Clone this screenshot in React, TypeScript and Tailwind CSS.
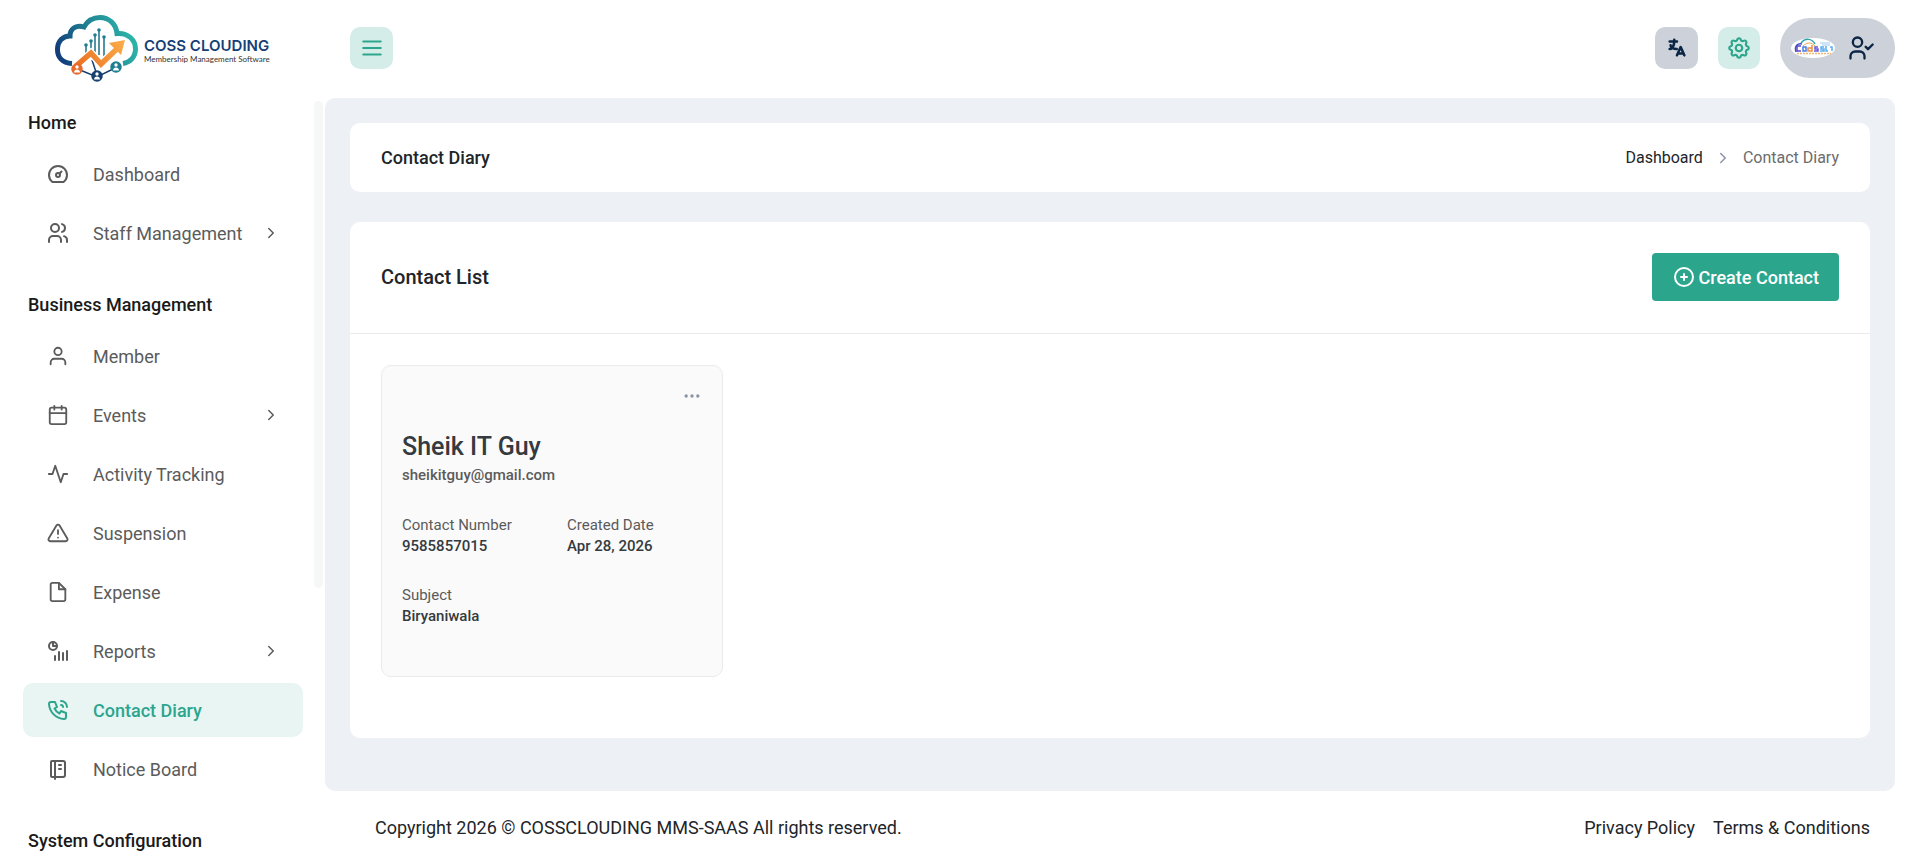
import clsx from 'clsx'
import type { IconType } from 'react-icons'
import { FiActivity, FiAlertTriangle, FiCalendar, FiFile, FiUser } from 'react-icons/fi'
import {
  TbChartInfographic,
  TbChevronRight,
  TbCirclePlus,
  TbDashboard,
  TbDots,
  TbMenu2,
  TbNotebook,
  TbPhoneCall,
  TbSettings,
  TbUsers,
} from 'react-icons/tb'

type NavItem = { label: string; icon: IconType; iconSize?: number; expandable?: boolean; active?: boolean }

const NAV: { title: string; items: NavItem[] }[] = [
  {
    title: 'Home',
    items: [
      { label: 'Dashboard', icon: TbDashboard },
      { label: 'Staff Management', icon: TbUsers, expandable: true },
    ],
  },
  {
    title: 'Business Management',
    items: [
      { label: 'Member', icon: FiUser, iconSize: 22 },
      { label: 'Events', icon: FiCalendar, iconSize: 22, expandable: true },
      { label: 'Activity Tracking', icon: FiActivity, iconSize: 22 },
      { label: 'Suspension', icon: FiAlertTriangle, iconSize: 22 },
      { label: 'Expense', icon: FiFile, iconSize: 22 },
      { label: 'Reports', icon: TbChartInfographic, expandable: true },
      { label: 'Contact Diary', icon: TbPhoneCall, active: true },
      { label: 'Notice Board', icon: TbNotebook },
    ],
  },
  { title: 'System Configuration', items: [] },
]

const contact = {
  name: 'Sheik IT Guy',
  email: 'sheikitguy@gmail.com',
  fields: [
    { label: 'Contact Number', value: '9585857015' },
    { label: 'Created Date', value: 'Apr 28, 2026' },
    { label: 'Subject', value: 'Biryaniwala' },
  ],
}

// cloud with the rising arrow and the three linked members
function CloudMark() {
  return (
    <svg width="84" height="68" viewBox="0 0 84 68" fill="none" className="shrink-0">
      <defs>
        <linearGradient id="cloud" x1="0" y1="50" x2="84" y2="15" gradientUnits="userSpaceOnUse">
          <stop offset="0.1" stopColor="#123f7c" />
          <stop offset="0.5" stopColor="#1f7f92" />
          <stop offset="0.9" stopColor="#2bb3a8" />
        </linearGradient>
        <linearGradient id="arrow" x1="20" y1="55" x2="72" y2="25" gradientUnits="userSpaceOnUse">
          <stop stopColor="#ea6a1f" />
          <stop offset="1" stopColor="#fbb04c" />
        </linearGradient>
      </defs>
      <path
        d="M18 48.500C8 48 3.500 42 3.500 34.500C3.500 26 9 21 16 21C16 13 23 9.500 30 12C34 5 40 2.500 46 2.500C55 2.500 62 9 63 18.500C74 17.500 81.500 25 81.500 34C81.500 42 76 47.500 69 48.500"
        stroke="url(#cloud)"
        strokeWidth="5"
      />
      <g stroke="#1d6f88" strokeWidth="1.500">
        <path d="M32 31v10M37 26v14M41 21v16M45 16v24M50 23v18" />
        <path d="M26 55l17 7l18-9M38 45l4 12" stroke="#17406f" />
      </g>
      <g fill="#1d7f90">
        <circle cx="32" cy="30" r="1.800" />
        <circle cx="37" cy="26" r="1.800" />
        <circle cx="41" cy="20" r="1.800" />
        <circle cx="45" cy="15" r="1.800" />
        <circle cx="50" cy="22" r="1.800" />
      </g>
      <path d="M22 51L37 38L47 49L66 31" stroke="#fff" strokeWidth="8" />
      <path d="M22 51L37 38L47 49L66 31" stroke="url(#arrow)" strokeWidth="5.500" />
      <path d="M71 25L55 28L67 40Z" fill="url(#arrow)" />
      {[
        { x: 23, y: 54, color: '#e8692a' },
        { x: 43, y: 61, color: '#17406f' },
        { x: 62, y: 52, color: '#1d7f90' },
      ].map((m) => (
        <g key={m.x}>
          <circle cx={m.x} cy={m.y} r="5" fill={m.color} stroke={m.color} strokeWidth="1.500" />
          <circle cx={m.x} cy={m.y - 2} r="1.700" fill="#fff" />
          <path d={`M${m.x - 3} ${m.y + 3.5}c0-4 6-4 6 0z`} fill="#fff" />
        </g>
      ))}
    </svg>
  )
}

function Avatar() {
  return (
    <svg width="44" height="20" viewBox="0 0 44 20" fill="none" aria-hidden="true" className="shrink-0">
      <ellipse cx="22" cy="10" rx="22" ry="10" fill="#fff" />
      <path d="M5 14c-2-6 2-9 6-8" stroke="#3f4fc4" strokeWidth="1.500" />
      <path d="M10 5c4-5 11-5 14 1" stroke="#2aa6a6" strokeWidth="1.500" />
      <path d="M12 8c4-4 9-4 12 0" stroke="#f0a24a" />
      <path d="M29 5h10M31 7h8" stroke="#9cc9f0" />
      <g strokeWidth="1.500">
        <path d="M10 8H6v5h4" stroke="#5a48c8" />
        <path d="M12 9h3v4h-3z" stroke="#4a7de0" />
        <path d="M21 7v6h-4v-3h4" stroke="#ee8f3a" />
        <path d="M27 9h-3v2h3v2h-4" stroke="#6a55d6" />
        <path d="M33 9h-3v2h3v2h-4M35 8v5h2M39 9h2v4" stroke="#58aef0" />
      </g>
      <path d="M6 15.500h34" stroke="#f4b472" strokeWidth="1.500" strokeDasharray="2 1" />
    </svg>
  )
}

function LanguageIcon() {
  return (
    <svg width="22" height="22" viewBox="0 0 24 24" fill="none" stroke="currentColor" strokeWidth="2.800" strokeLinecap="round" strokeLinejoin="round">
      <path d="M4 5h8M9 3v2c0 4.418-2.239 8-5 8M5 9c0 2.144 2.952 3.908 6.700 4M12 20l4-9l4 9M19.100 18h-6.200" />
    </svg>
  )
}

function UserCheckIcon() {
  return (
    <svg width="28" height="28" viewBox="0 0 24 24" fill="none" stroke="currentColor" strokeWidth="2" strokeLinecap="round" strokeLinejoin="round">
      <circle cx="9" cy="7" r="4" />
      <path d="M3 21v-2a4 4 0 0 1 4-4h4a4 4 0 0 1 4 4v2M16 11l2 2l4-4" />
    </svg>
  )
}

function Sidebar() {
  return (
    <aside className="flex h-screen w-[325px] shrink-0 flex-col overflow-hidden">
      <a href="#" className="flex h-[98px] shrink-0 items-center gap-1.5 pl-[54px]">
        <CloudMark />
        <span className="flex flex-col pt-1">
          <span className="font-[Inter,sans-serif] text-[15px] leading-4 font-semibold whitespace-nowrap text-[#173f77]">
            COSS CLOUDING
          </span>
          <span className="font-[Lato,sans-serif] text-[8px] leading-[10px] whitespace-nowrap text-[#333]">
            Membership Management Software
          </span>
        </span>
      </a>

      <div className="flex min-h-0 grow pr-0.5">
        <nav className="min-w-0 grow overflow-hidden pt-[13px] pr-[11px] pl-[23px]">
          {NAV.map((group) => (
            <section key={group.title} className="mb-[33px]">
              <h2 className="mb-3 pl-[5px] text-[18px] leading-6 font-medium text-[#1a1a1a]">{group.title}</h2>
              <ul className="flex flex-col gap-[5px]">
                {group.items.map(({ label, icon: Icon, iconSize = 24, expandable, active }) => (
                  <li key={label}>
                    <a
                      href="#"
                      className={clsx(
                        'flex h-[54px] items-center rounded-[10px] px-[23px] text-[18px]',
                        active ? 'bg-[#e9f5f3] font-medium text-[#2ca58d]' : 'text-[#5b5b5b]',
                      )}
                    >
                      <span className="mr-[23px] flex size-6 shrink-0 items-center justify-center">
                        <Icon size={iconSize} />
                      </span>
                      <span className="grow">{label}</span>
                      {expandable && <TbChevronRight size={18} />}
                    </a>
                  </li>
                ))}
              </ul>
            </section>
          ))}
        </nav>
        <div className="mt-[3px] h-[487px] w-[9px] shrink-0 rounded-full bg-[#f5f8f7]" />
      </div>
    </aside>
  )
}

function Header() {
  return (
    <header className="flex h-[98px] items-center justify-between pb-0.5 pl-[25px]">
      <button aria-label="Toggle menu" className="flex h-[42px] w-[43px] items-center justify-center rounded-[10px] bg-[#d5ede8] text-[#2ca58d]">
        <TbMenu2 size={26} />
      </button>
      <div className="flex items-center gap-5">
        <button aria-label="Language" className="flex h-[42px] w-[43px] items-center justify-center rounded-[10px] bg-[#cdd2da] text-[#0b2545]">
          <LanguageIcon />
        </button>
        <button aria-label="Settings" className="flex size-[42px] items-center justify-center rounded-[10px] bg-[#d5ede8] text-[#2ca58d]">
          <TbSettings size={26} />
        </button>
        <button aria-label="Account" className="flex h-[60px] w-[115px] items-center gap-3 rounded-full bg-[#cdd2da] pl-[11px] text-[#0b2545]">
          <Avatar />
          <UserCheckIcon />
        </button>
      </div>
    </header>
  )
}

function ContactCard() {
  return (
    <article className="h-[312px] w-[342px] rounded-[10px] border border-[#ebebeb] bg-[#fafafa] px-5 pt-5">
      <div className="flex justify-end">
        <button aria-label="Contact actions" className="text-[#8a94a6]">
          <TbDots size={20} />
        </button>
      </div>
      <h3 className="mt-[25px] text-[25px] leading-8 font-medium text-[#343a40]">{contact.name}</h3>
      <p className="text-[15px] leading-6 font-medium text-[#5b5b5b]">{contact.email}</p>
      <dl className="mt-7 grid grid-cols-[165px_1fr] gap-y-7 text-[15px] leading-[21px]">
        {contact.fields.map((field) => (
          <div key={field.label}>
            <dt className="text-[#5b5b5b]">{field.label}</dt>
            <dd className="font-medium text-[#343a40]">{field.value}</dd>
          </div>
        ))}
      </dl>
    </article>
  )
}

export default function App() {
  return (
    <div className="flex min-h-screen bg-white font-[Roboto,sans-serif] text-[#212529]">
      <Sidebar />
      <div className="min-w-0 grow pr-[15px]">
        <Header />
        <main className="rounded-[10px] bg-[#edf0f5] px-[25px] pt-[25px] pb-[53px]">
          <div className="flex h-[69px] items-center justify-between rounded-[10px] bg-white px-[31px]">
            <h1 className="text-[18px] font-medium">Contact Diary</h1>
            <nav aria-label="Breadcrumb" className="flex items-center gap-[11px] text-[16px]">
              <a href="#">Dashboard</a>
              <TbChevronRight size={18} className="text-[#8a94a6]" />
              <span className="text-[#6c6c6c]">Contact Diary</span>
            </nav>
          </div>

          <section className="mt-[30px] rounded-[10px] bg-white">
            <div className="flex h-28 items-center justify-between border-b border-[#ebebeb] px-[31px] pb-px">
              <h2 className="text-[20px] font-medium">Contact List</h2>
              <button className="flex h-12 items-center gap-[3px] rounded bg-[#2ca58d] px-5 text-[18px] font-medium text-white">
                <TbCirclePlus size={24} />
                Create Contact
              </button>
            </div>
            <div className="px-[31px] pt-[31px] pb-[61px]">
              <ContactCard />
            </div>
          </section>
        </main>

        <footer className="flex h-[72px] items-center justify-between px-[25px] text-[18px]">
          <p className="pl-[25px]">Copyright 2026 © COSSCLOUDING MMS-SAAS All rights reserved.</p>
          <div className="flex gap-[18px]">
            <a href="#">Privacy Policy</a>
            <a href="#">Terms &amp; Conditions</a>
          </div>
        </footer>
      </div>
    </div>
  )
}
